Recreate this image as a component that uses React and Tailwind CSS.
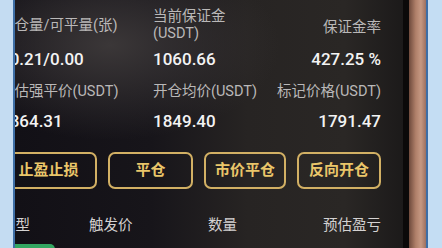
const labelCls = 'text-[14.5px] leading-[17px] text-[#bab8b8]'
const valueCls = 'text-[17px] leading-[22px] font-medium text-[#f3f3f3]'

function ActionButton({ label, width }) {
  return (
    <button
      type="button"
      className={`flex h-[37px] ${width} items-center justify-center rounded-[7px] border-2 border-[#d2b064] text-[15px] font-bold text-[#eac66a]`}
    >
      {label}
    </button>
  )
}

export default function App() {
  return (
    <div className="flex h-[248px] w-[442px] overflow-hidden bg-[#c3dcf3] font-['Roboto','Noto_Sans_CJK_SC',sans-serif]">
      <div className="w-[13px] bg-[#c4dcf2]" />
      <div className="w-[2px] bg-[#3d6ea6]" />

      <div className="w-[388px] overflow-hidden bg-[image:radial-gradient(ellipse_170px_95px_at_95px_45px,#3b3738_0%,transparent_100%),linear-gradient(to_right,#121016_0%,#17151a_35%,#272423_60%,#2a2725_85%,#1c1a1a_100%)]">
        <div className="ml-[-15px] w-[403px] pr-[22px]">
          <div className="mt-[8px] grid h-[32px] grid-cols-[153px_1fr_auto] items-center">
            <div className={labelCls}>持仓量/可平量(张)</div>
            <div className={labelCls}>
              <div>当前保证金</div>
              <div>(USDT)</div>
            </div>
            <div className={`${labelCls} mt-[4px] text-right`}>保证金率</div>
          </div>

          <div className="mt-[8px] grid grid-cols-[153px_1fr_auto] items-center">
            <div className={valueCls}>20.21/0.00</div>
            <div className={valueCls}>1060.66</div>
            <div className={`${valueCls} text-right`}>427.25 %</div>
          </div>

          <div className="mt-[13px] grid grid-cols-[153px_1fr_auto] items-center">
            <div className={labelCls}>预估强平价(USDT)</div>
            <div className={labelCls}>开仓均价(USDT)</div>
            <div className={`${labelCls} text-right`}>标记价格(USDT)</div>
          </div>

          <div className="mt-[10px] grid grid-cols-[153px_1fr_auto] items-center">
            <div className={valueCls}>1864.31</div>
            <div className={valueCls}>1849.40</div>
            <div className={`${valueCls} text-right`}>1791.47</div>
          </div>

          <div className="mt-[20px] flex gap-[11px]">
            <ActionButton label="止盈止损" width="w-[97px]" />
            <ActionButton label="平仓" width="w-[85px]" />
            <ActionButton label="市价平仓" width="w-[82px]" />
            <ActionButton label="反向开仓" width="w-[84px]" />
          </div>

          <div className="mt-[28px] grid grid-cols-[89px_119px_1fr_auto] items-center text-[14.5px] leading-[17px] text-[#d4d2d2]">
            <div className="pl-[1px]">类型</div>
            <div>触发价</div>
            <div>数量</div>
            <div className="text-right">预估盈亏</div>
          </div>

          <div className="mt-[10px] grid grid-cols-[89px_119px_1fr_auto] items-start text-[15px] leading-[20px] font-medium">
            <div className="h-[18px] w-[55px] rounded-[5px] bg-[#33a661]" />
            <div />
            <div className="text-[#eeeeee]">50.010</div>
            <div className="text-right text-[#35b56a]">5885.54</div>
          </div>
        </div>
      </div>

      <div className="w-[6px] bg-[#0b0909]" />
      <div className="w-[17px] bg-[linear-gradient(to_right,#6e4a3c,#b0806a_40%,#c59882_70%,#9c7060)]" />
      <div className="w-[2px] bg-[#3d6ea6]" />
      <div className="flex-1 bg-[#c4ddf3]" />
    </div>
  )
}
